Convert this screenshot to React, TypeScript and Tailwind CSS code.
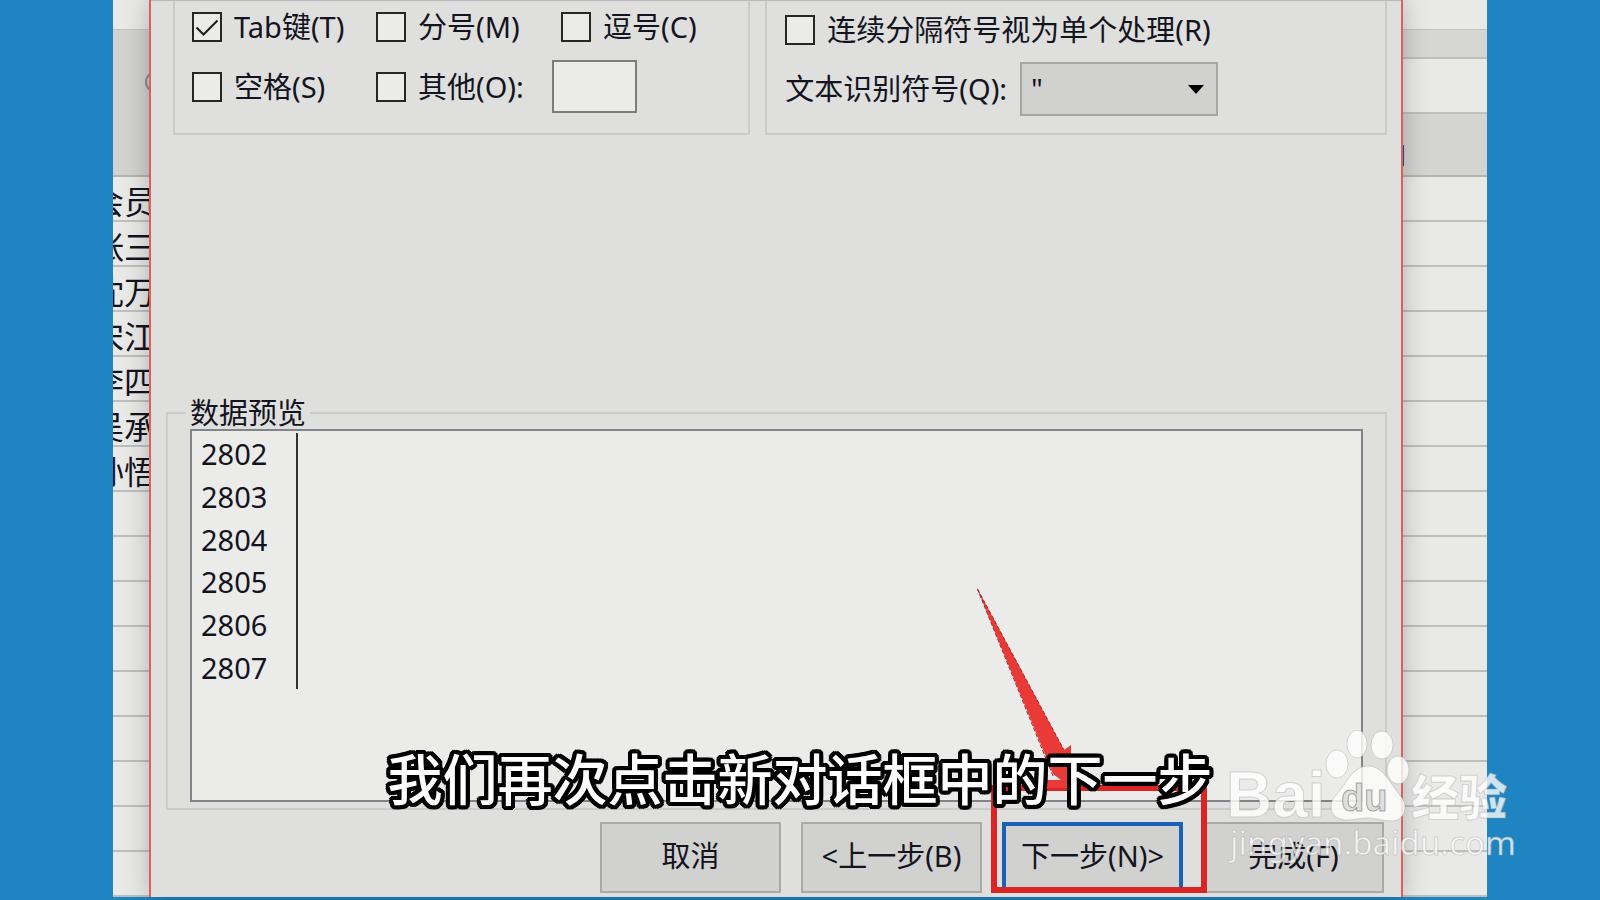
import type { ReactNode } from "react";

const names = ["会员", "张三", "沈万", "宋江", "李四", "吴承", "孙悟"];
const preview = ["2802", "2803", "2804", "2805", "2806", "2807"];
const rows = Array.from({ length: 16 }, (_, i) => names[i] ?? "");

function CheckField({
  label,
  checked,
  className = "",
}: {
  label: string;
  checked?: boolean;
  className?: string;
}) {
  return (
    <label className={`flex items-center gap-3 whitespace-nowrap ${className}`}>
      <span className="grid size-[30px] shrink-0">
        <input
          type="checkbox"
          defaultChecked={checked}
          className="peer col-start-1 row-start-1 size-[30px] appearance-none border-2 border-[#262626] bg-[#ebebea]"
        />
        <svg
          viewBox="0 0 30 30"
          fill="none"
          stroke="#1c1c1c"
          strokeWidth="2"
          className="pointer-events-none invisible col-start-1 row-start-1 peer-checked:visible"
        >
          <path d="M4.500 15.500 11.500 22.500 25.500 8.500" />
        </svg>
      </span>
      {label}
    </label>
  );
}

/** Strip of the worksheet that stays visible beside the dialog. */
function SheetRows({ cells }: { cells: string[] }) {
  return (
    <table className="w-full table-fixed border-separate border-spacing-0">
      <tbody>
        {cells.map((cell, i) => (
          <tr key={i} className="h-[45px]">
            <td className="h-[45px] border-b-2 border-[#bfbfbe] p-0">
              <div className="flex h-[43px] items-center justify-center pt-[6px] pr-[14px] text-[32px] leading-8 whitespace-nowrap">
                {cell}
              </div>
            </td>
          </tr>
        ))}
      </tbody>
    </table>
  );
}

function DialogButton({
  children,
  primary,
}: {
  children: ReactNode;
  primary?: boolean;
}) {
  return (
    <button
      type="button"
      className={`h-[71px] w-[181px] bg-[#d1d1cf] pb-1 whitespace-nowrap ${
        primary ? "border-4 border-[#1c62b4]" : "border-2 border-[#a9a9a8]"
      }`}
    >
      {children}
    </button>
  );
}

/** Red frame and arrow pointing at the next-step button. */
function Callout() {
  return (
    <>
      <div className="pointer-events-none absolute -top-[37px] -right-6 bottom-0 -left-[11px] border-[6px] border-[#d92524]" />
      <svg
        viewBox="0 0 100 206"
        className="pointer-events-none absolute -top-[234px] -left-[25px] h-[206px] w-[100px]"
      >
        <path
          d="M0 0 87 162 94 157 94 200 50 200 70 192 84 192 76 186Z"
          fill="#e93a38"
        />
        <path
          d="M76 188 0 0 87 162"
          fill="none"
          stroke="#a82222"
          strokeWidth="1"
          strokeDasharray="4 2"
        />
      </svg>
    </>
  );
}

function Watermark() {
  return (
    <svg
      viewBox="0 0 300 150"
      className="pointer-events-none absolute right-[80px] bottom-[20px] z-30 h-[150px] w-[300px]"
      fill="#ffffff"
      fillOpacity="0.8"
      stroke="#9a9a9a"
      strokeOpacity="0.4"
      strokeWidth="1"
    >
      <text x="6" y="87" fontFamily="Liberation Sans" fontWeight="700" fontSize="64">
        Bai
      </text>
      <ellipse cx="117" cy="34" rx="11" ry="14" />
      <ellipse cx="137" cy="14" rx="10" ry="14" />
      <ellipse cx="162" cy="15" rx="11" ry="14" />
      <ellipse cx="178" cy="40" rx="11" ry="14" />
      <path d="M148 36c-13 0-20 13-27 23-5 7-10 9-10 18 0 8 7 13 15 13 8 0 14-2 22-2s14 3 24 3c8 0 13-6 13-14 0-8-5-11-9-17-8-11-15-24-28-24Z" />
      <text
        x="121"
        y="81"
        fontFamily="Liberation Sans"
        fontWeight="700"
        fontSize="38"
        fill="#d8d8d7"
        stroke="#8f8f8f"
        strokeOpacity="0.8"
      >
        du
      </text>
      <text x="191" y="85" fontFamily="Noto Sans CJK SC" fontWeight="900" fontSize="48">
        经验
      </text>
      <text x="10" y="125" fontFamily="Noto Sans, sans-serif" fontSize="33">
        jingyan.baidu.com
      </text>
    </svg>
  );
}

export default function App() {
  return (
    <div className="relative flex min-h-screen overflow-hidden bg-[#1e84c2] px-[113px] pb-[3px] font-['Noto_Sans','Noto_Sans_CJK_SC',sans-serif] text-[29px] leading-7 text-[#14141f]">
      <aside className="w-9 shrink-0 overflow-hidden bg-[#e9e9e8]">
        <div className="h-[30px] border-b border-[#c4c4c3]" />
        <div className="flex h-[147px] justify-end overflow-hidden border-b-2 border-[#b4b4b3] bg-[#d2d2d1] pt-10">
          <svg viewBox="0 0 5 24" className="h-6 w-[5px]" fill="none" stroke="#8c8c8c" strokeWidth="2">
            <circle cx="12" cy="12" r="10" />
          </svg>
        </div>
        <SheetRows cells={rows} />
      </aside>

      <main className="z-10 min-w-0 flex-1 border-x-2 border-[#d9625a] bg-[#dfdfdd] shadow-[0_0_24px_rgba(0,0,0,0.25)]">
        <div className="flex gap-[15px] border-t border-[#b9b9c2] pr-[14px] pl-[22px]">
          <fieldset className="flex flex-[577] flex-col gap-[18px] border-2 border-t-0 border-[#cbcbca] pt-[11px] pb-5 pl-[17px]">
            <div className="flex h-[30px] items-center">
              <CheckField label="Tab键(T)" checked className="w-[184px]" />
              <CheckField label="分号(M)" className="w-[185px]" />
              <CheckField label="逗号(C)" />
            </div>
            <div className="flex h-[53px] items-center">
              <CheckField label="空格(S)" className="w-[184px]" />
              <CheckField label="其他(O):" className="w-[176px]" />
              <input
                type="text"
                aria-label="其他分隔符号"
                className="h-[53px] w-[85px] border-2 border-[#7c7c7c] bg-[#ebebea] px-2"
              />
            </div>
          </fieldset>
          <fieldset className="flex flex-[622] flex-col gap-[17px] border-2 border-t-0 border-[#cbcbca] pt-[14px] pb-[17px] pl-[18px]">
            <CheckField label="连续分隔符号视为单个处理(R)" className="h-[30px]" />
            <div className="flex h-[54px] items-center justify-between pr-[167px]">
              <label htmlFor="qualifier" className="whitespace-nowrap">
                文本识别符号(Q):
              </label>
              <span className="grid w-[198px] items-center">
                <select
                  id="qualifier"
                  className="col-start-1 row-start-1 h-[54px] w-full appearance-none border-2 border-[#a6a6a5] bg-[#d1d1cf] px-[9px]"
                >
                  <option>"</option>
                </select>
                <svg
                  viewBox="0 0 16 9"
                  className="pointer-events-none col-start-1 row-start-1 mr-[14px] h-[9px] w-4 justify-self-end"
                >
                  <path d="M0 0h16L8 9Z" />
                </svg>
              </span>
            </div>
          </fieldset>
        </div>

        <fieldset className="mt-[264px] mr-[14px] ml-[15px] border-2 border-[#cbcbca] px-[22px] pt-[2px] pb-[6px]">
          <legend className="-ml-1 px-1">数据预览</legend>
          <div className="h-[373px] border-2 border-[#7f8488] bg-[#ebebe9] pt-[2px]">
            <table className="h-64 w-[106px] border-separate border-spacing-0 border-r-2 border-[#333333]">
              <tbody>
                {preview.map((value) => (
                  <tr key={value}>
                    <td className="p-0 pl-[9px]">{value}</td>
                  </tr>
                ))}
              </tbody>
            </table>
          </div>
        </fieldset>

        <div className="mt-3 flex justify-end gap-5 pr-[17px]">
          <DialogButton>取消</DialogButton>
          <DialogButton>&lt;上一步(B)</DialogButton>
          <div className="relative z-10">
            <DialogButton primary>下一步(N)&gt;</DialogButton>
            <Callout />
          </div>
          <DialogButton>完成(F)</DialogButton>
        </div>
      </main>

      <aside className="w-[84px] shrink-0 overflow-hidden bg-[#e9e9e8]">
        <div className="h-[30px] border-b border-[#c4c4c3]" />
        <div className="h-[29px] border-b-2 border-[#bfbfbe] bg-[#d6d6d5]" />
        <div className="h-[55px] border-b-2 border-[#bfbfbe]" />
        <div className="flex h-[63px] items-end overflow-hidden border-b-2 border-[#b4b4b3] bg-[#d4d4d3] pb-[6px]">
          <span className="-ml-[18px]">H</span>
        </div>
        <SheetRows cells={rows.map(() => "")} />
      </aside>

      <p className="pointer-events-none absolute inset-x-0 bottom-[93px] z-20 text-center text-[55px] leading-[56px] font-medium whitespace-nowrap text-white [text-shadow:4px_0_#000,4px_2px_#000,3px_3px_#000,2px_4px_#000,0_4px_#000,-2px_4px_#000,-3px_3px_#000,-4px_2px_#000,-4px_0_#000,-4px_-2px_#000,-3px_-3px_#000,-2px_-4px_#000,0_-4px_#000,2px_-4px_#000,3px_-3px_#000,4px_-2px_#000,2px_0_#000,-2px_0_#000,0_2px_#000,0_-2px_#000]">
        我们再次点击新对话框中的下一步
      </p>
      <Watermark />
    </div>
  );
}
